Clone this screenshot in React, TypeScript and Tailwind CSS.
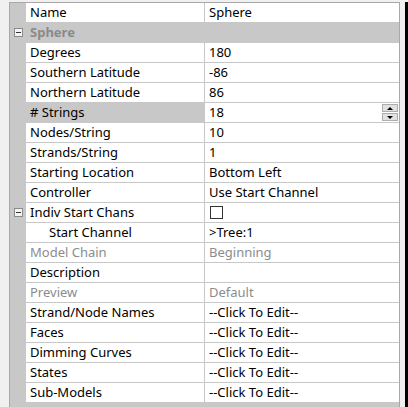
import React from "react"

type Row = {
  name: string
  value?: string
  kind?: "header" | "normal" | "disabled" | "check" | "spin"
  collapse?: boolean
  indent?: boolean
  selected?: boolean
}

const rows: Row[] = [
  { name: "Name", value: "Sphere" },
  { name: "Sphere", kind: "header", collapse: true },
  { name: "Degrees", value: "180" },
  { name: "Southern Latitude", value: "-86" },
  { name: "Northern Latitude", value: "86" },
  { name: "# Strings", value: "18", kind: "spin", selected: true },
  { name: "Nodes/String", value: "10" },
  { name: "Strands/String", value: "1" },
  { name: "Starting Location", value: "Bottom Left" },
  { name: "Controller", value: "Use Start Channel" },
  { name: "Indiv Start Chans", kind: "check", collapse: true },
  { name: "Start Channel", value: ">Tree:1", indent: true },
  { name: "Model Chain", value: "Beginning", kind: "disabled" },
  { name: "Description", value: "" },
  { name: "Preview", value: "Default", kind: "disabled" },
  { name: "Strand/Node Names", value: "--Click To Edit--" },
  { name: "Faces", value: "--Click To Edit--" },
  { name: "Dimming Curves", value: "--Click To Edit--" },
  { name: "States", value: "--Click To Edit--" },
  { name: "Sub-Models", value: "--Click To Edit--" },
]

function Collapse() {
  return (
    <div className="w-[9px] h-[9px] border border-[#8a8a8a] bg-[#f4f4f4] flex items-center justify-center">
      <div className="w-[5px] h-px bg-[#333]" />
    </div>
  )
}

function Spin() {
  return (
    <div className="flex flex-col gap-px mr-px">
      <div className="w-[16px] h-[8px] border border-[#adadad] bg-[#e1e1e1] flex items-center justify-center">
        <div className="w-0 h-0 border-l-[3px] border-r-[3px] border-b-[3px] border-l-transparent border-r-transparent border-b-black" />
      </div>
      <div className="w-[16px] h-[8px] border border-[#adadad] bg-[#e1e1e1] flex items-center justify-center">
        <div className="w-0 h-0 border-l-[3px] border-r-[3px] border-t-[3px] border-l-transparent border-r-transparent border-t-black" />
      </div>
    </div>
  )
}

export default function App() {
  return (
    <div
      className="w-[408px] h-[407px] overflow-hidden bg-[#f0f0f0] flex pt-[2px] pl-[9px] text-[13px] leading-none text-black"
      style={{ fontFamily: '"Segoe UI", "Noto Sans", sans-serif' }}
    >
      <div className="w-[391px] h-[410px] border-l border-t border-r border-[#a8a8a8] bg-[#c8c8c8] flex flex-col">
        {rows.map((r) => (
          <div key={r.name} className="flex h-[20px]">
            <div className="w-[16px] shrink-0 flex items-center justify-center pb-px">
              {r.collapse && <Collapse />}
            </div>
            {r.kind === "header" ? (
              <div className="flex-1 border-b border-[#c8c8c8] bg-[#c8c8c8] flex items-center pl-[4px] font-bold text-[#8a8a8a]">
                {r.name}
              </div>
            ) : (
              <>
                <div
                  className={`w-[179px] shrink-0 border-b border-r border-[#c8c8c8] flex items-center ${
                    r.indent ? "pl-[23px]" : "pl-[4px]"
                  } ${r.selected ? "bg-[#c8c8c8]" : "bg-white"} ${
                    r.kind === "disabled" ? "text-[#8c8c8c]" : ""
                  }`}
                >
                  {r.name}
                </div>
                <div
                  className={`flex-1 bg-white border-b border-[#c8c8c8] flex items-center justify-between pl-[4px] ${
                    r.kind === "disabled" ? "text-[#8c8c8c]" : ""
                  }`}
                >
                  {r.kind === "check" ? (
                    <div className="w-[13px] h-[13px] border border-[#333] bg-white ml-px" />
                  ) : (
                    <span>{r.value}</span>
                  )}
                  {r.kind === "spin" && <Spin />}
                </div>
              </>
            )}
          </div>
        ))}
      </div>
      <div className="flex-1" />
      <div className="w-[3px] h-full bg-black" />
    </div>
  )
}
